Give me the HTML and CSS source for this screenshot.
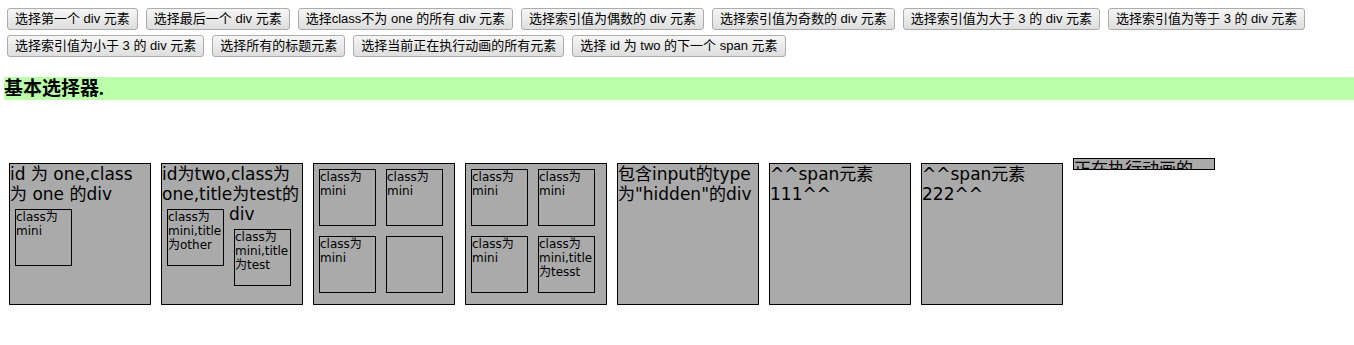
FILE: index.html
```html
<!DOCTYPE html>
<html lang="zh-CN">
<head>
<meta charset="utf-8">
<title>基本选择器</title>
<link rel="stylesheet" href="styles.css">
</head>
<body>
<div class="toolbar">
  <button class="btn">选择第一个 div 元素</button>
  <button class="btn">选择最后一个 div 元素</button>
  <button class="btn">选择class不为 one 的所有 div 元素</button>
  <button class="btn">选择索引值为偶数的 div 元素</button>
  <button class="btn">选择索引值为奇数的 div 元素</button>
  <button class="btn">选择索引值为大于 3 的 div 元素</button>
  <button class="btn">选择索引值为等于 3 的 div 元素</button>
  <button class="btn">选择索引值为小于 3 的 div 元素</button>
  <button class="btn">选择所有的标题元素</button>
  <button class="btn">选择当前正在执行动画的所有元素</button>
  <button class="btn">选择 id 为 two 的下一个 span 元素</button>
</div>

<h3 class="title">基本选择器.</h3>

<div class="stage">
  <div class="box">id 为 one,class 为 one 的div
    <div class="mini">class为mini</div>
  </div>
  <div class="box">id为two,class为one,title为test的div
    <div class="mini">class为mini,title为other</div>
    <div class="mini">class为mini,title为test</div>
  </div>
  <div class="box">
    <div class="mini">class为mini</div>
    <div class="mini">class为mini</div>
    <div class="mini">class为mini</div>
    <div class="mini"></div>
  </div>
  <div class="box">
    <div class="mini">class为mini</div>
    <div class="mini">class为mini</div>
    <div class="mini">class为mini</div>
    <div class="mini">class为mini,title为tesst</div>
  </div>
  <div class="box">包含input的type为"hidden"的div<input type="hidden" value="hidden"></div>
  <span class="box">^^span元素 111^^</span>
  <span class="box">^^span元素 222^^</span>
  <div class="box animating">正在执行动画的div元素.</div>
</div>
</body>
</html>
```

FILE: styles.css
```css
body {
  margin: 0;
  background: #ffffff;
  color: #000000;
  font-family: "DejaVu Sans", "Noto Sans CJK SC", sans-serif;
}

.toolbar {
  display: flex;
  flex-wrap: wrap;
  gap: 5px 8px;
  padding: 8px 0 0 7px;
}

.btn {
  height: 22px;
  margin: 0;
  padding: 0 7px;
  font-family: "Liberation Sans", "Noto Sans CJK SC", sans-serif;
  font-size: 13px;
  line-height: 20px;
  color: #000000;
  background: linear-gradient(#f6f6f6, #dedede);
  border: 1px solid #acacac;
  border-radius: 3px;
}

.title {
  margin: 20px 0 0 4px;
  height: 23px;
  font-family: "Liberation Serif", "Noto Sans CJK SC", serif;
  font-size: 19px;
  line-height: 23px;
  font-weight: bold;
  background: #bbffaa;
}

.stage {
  display: flex;
  align-items: flex-start;
  margin-top: 58px;
  padding-left: 4px;
}

.box {
  display: block;
  flex: none;
  width: 140px;
  height: 140px;
  margin: 5px;
  background: #aaaaaa;
  border: 1px solid #000000;
  font-size: 17px;
  line-height: 20px;
}

.mini {
  float: left;
  width: 55px;
  height: 55px;
  margin: 5px;
  background: #aaaaaa;
  border: 1px solid #000000;
  font-size: 12px;
  line-height: 14px;
}

.animating {
  height: 10px;
  margin-top: 0;
  margin-bottom: 0;
  overflow: hidden;
}
```
